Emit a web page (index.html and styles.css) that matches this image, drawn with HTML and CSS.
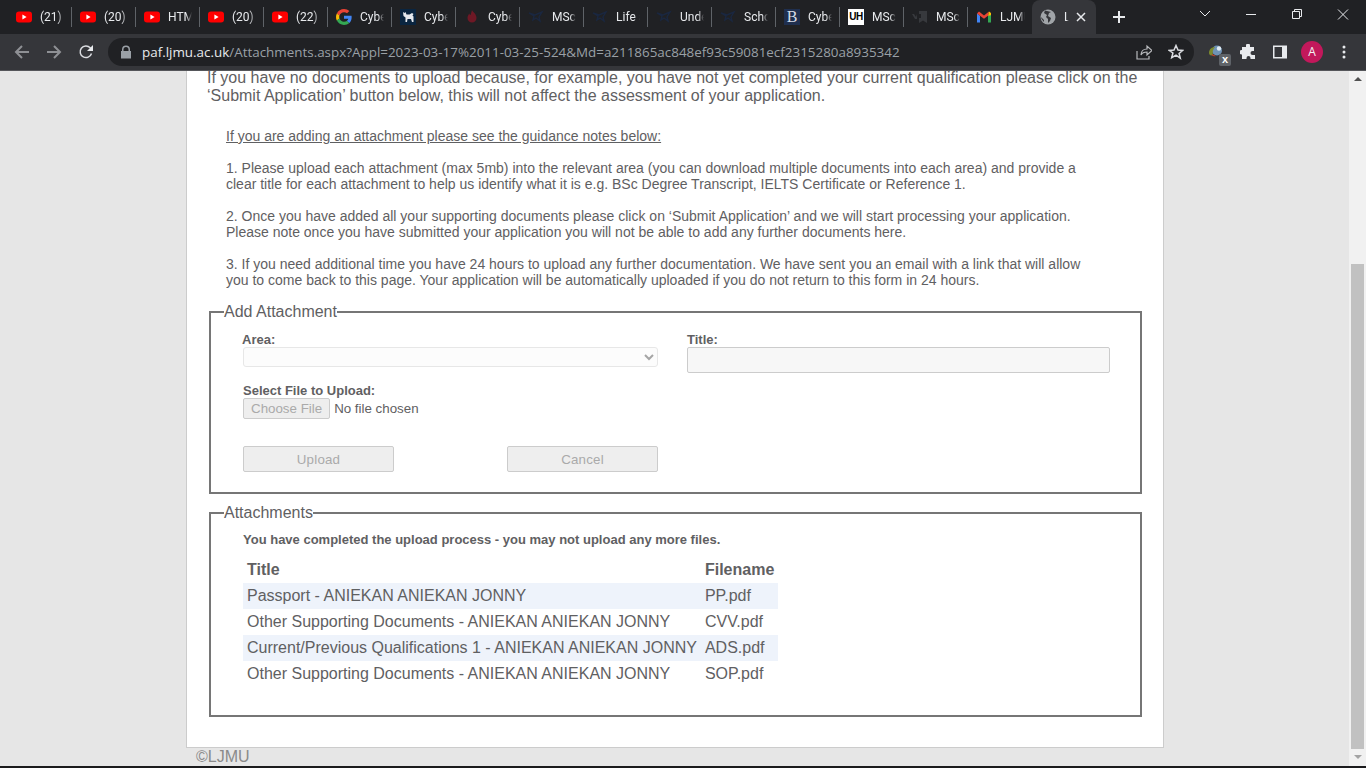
FILE: index.html
```html
<!DOCTYPE html>
<html>

<head>
    <title>Attachments</title>
    <link rel="stylesheet" href="styles.css">
</head>

<body>
    <svg class="sprite" width="0" height="0">
        <symbol id="yt" viewBox="0 0 16 16">
            <rect x="0" y="2.5" width="16" height="11" rx="3" fill="#f00" />
            <path d="M6.4 5.6 10.6 8l-4.2 2.4z" fill="#fff" />
        </symbol>
        <symbol id="google" viewBox="0 0 48 48">
            <path fill="#EA4335" d="M24 9.5c3.54 0 6.71 1.22 9.21 3.6l6.85-6.85C35.9 2.38 30.47 0 24 0 14.62 0 6.51 5.38 2.56 13.22l7.98 6.19C12.43 13.72 17.74 9.5 24 9.5z" />
            <path fill="#4285F4" d="M46.98 24.55c0-1.57-.15-3.09-.38-4.55H24v9.02h12.94c-.58 2.96-2.26 5.48-4.78 7.18l7.73 6c4.51-4.18 7.09-10.36 7.09-17.65z" />
            <path fill="#FBBC05" d="M10.53 28.59c-.48-1.45-.76-2.99-.76-4.59s.27-3.14.76-4.59l-7.98-6.19C.92 16.46 0 20.12 0 24c0 3.88.92 7.54 2.56 10.78l7.97-6.19z" />
            <path fill="#34A853" d="M24 48c6.48 0 11.93-2.13 16.03-5.81l-7.73-6c-2.15 1.45-4.92 2.3-8.3 2.3-6.26 0-11.57-4.22-13.47-9.91l-7.98 6.19C6.51 42.62 14.62 48 24 48z" />
        </symbol>
        <symbol id="lion" viewBox="0 0 16 16">
            <rect width="16" height="16" fill="#0a2540" />
            <path d="M3 3l1.500 1 1-1 1 2.500h3L12 4l1.500 1-1 1.500 1 1V13H12l-1-3H7.500L7 13H5.500V8.500L3.500 7z" fill="#e6e9ee" />
        </symbol>
        <symbol id="flame" viewBox="0 0 16 16">
            <path d="M8 1c.5 2 4.500 3.500 4.500 8a4.500 4.500 0 0 1-9 0c0-2 1-3.500 2-4.500 0 1 .5 1.500 1 1.500C7 4.500 7.500 3 8 1z" fill="#6e1825" />
        </symbol>
        <symbol id="navy" viewBox="0 0 16 16">
            <path d="M1 4l6 2 7-3-3 5 1 4-4-3-3 2 1-4z" fill="none" stroke="#1a2740" stroke-width="1.4" />
        </symbol>
        <symbol id="gmail" viewBox="0 0 16 16">
            <path d="M1 13.500V4.500l3 2.200v6.800z" fill="#4285f4" />
            <path d="M12 13.500V6.700l3-2.200v9z" fill="#34a853" />
            <path d="M1 4.500 3 2.500l5 4 5-4-1 4.200L8 9.700 4 6.700z" fill="#ea4335" />
            <path d="M13 2.500l2 1.500v2.200l-3 .5z" fill="#fbbc04" />
        </symbol>
        <symbol id="shield" viewBox="0 0 16 16">
            <path d="M7 2h8v12l-4-2.500L7 14V9h2V5H7zM0 5h2l2 3 1-3v5H3z" fill="#37393d" />
        </symbol>
        <symbol id="globe" viewBox="0 0 16 16">
            <circle cx="8" cy="8" r="7.500" fill="#a0a4a8" />
            <path d="M5 1.500 4 4l3 2-1 2 2 2v4l2-2 1-3-3-2 1-3 2-1zM1 8l3 3v2L1.500 10z" fill="#35363a" />
        </symbol>
    </svg>

    <div class="tabstrip">
        <div class="tab"><svg class="favicon"><use href="#yt" /></svg><span class="tab-title">(21) YouTube</span></div>
        <div class="tab"><svg class="favicon"><use href="#yt" /></svg><span class="tab-title">(20) YouTube</span></div>
        <div class="tab"><svg class="favicon"><use href="#yt" /></svg><span class="tab-title">HTML Tutorial</span></div>
        <div class="tab"><svg class="favicon"><use href="#yt" /></svg><span class="tab-title">(20) YouTube</span></div>
        <div class="tab"><svg class="favicon"><use href="#yt" /></svg><span class="tab-title">(22) YouTube</span></div>
        <div class="tab"><svg class="favicon"><use href="#google" /></svg><span class="tab-title">Cyber security</span></div>
        <div class="tab"><svg class="favicon"><use href="#lion" /></svg><span class="tab-title">Cyber security</span></div>
        <div class="tab"><svg class="favicon"><use href="#flame" /></svg><span class="tab-title">Cyber security</span></div>
        <div class="tab"><svg class="favicon"><use href="#navy" /></svg><span class="tab-title">MSc Cyber</span></div>
        <div class="tab"><svg class="favicon"><use href="#navy" /></svg><span class="tab-title">Life at</span></div>
        <div class="tab"><svg class="favicon"><use href="#navy" /></svg><span class="tab-title">Undergraduate</span></div>
        <div class="tab"><svg class="favicon"><use href="#navy" /></svg><span class="tab-title">Scholarships</span></div>
        <div class="tab"><div class="favicon fav-b">B</div><span class="tab-title">Cyber security</span></div>
        <div class="tab"><div class="favicon fav-uh">UH</div><span class="tab-title">MSc Cyber</span></div>
        <div class="tab"><svg class="favicon"><use href="#shield" /></svg><span class="tab-title">MSc Cyber</span></div>
        <div class="tab tab-last"><svg class="favicon"><use href="#gmail" /></svg><span class="tab-title">LJMU Mail</span></div>
        <div class="tab tab-active">
            <svg class="favicon"><use href="#globe" /></svg>
            <span class="tab-title">LJMU</span>
            <svg class="tab-close" viewBox="0 0 10 10"><path d="M1 1l8 8M9 1l-8 8" /></svg>
        </div>
        <svg class="new-tab" viewBox="0 0 12 12"><path d="M6 0v12M0 6h12" /></svg>
        <div class="window-controls">
            <svg class="win-icon" viewBox="0 0 46 28"><path d="M18 11l5 5 5-5" /></svg>
            <svg class="win-icon" viewBox="0 0 46 28"><path d="M18 14.500h10" /></svg>
            <svg class="win-icon" viewBox="0 0 46 28"><path d="M18.500 11.500h7v7h-7zM20.500 11.500v-2h7v7h-2" /></svg>
            <svg class="win-icon" viewBox="0 0 46 28"><path d="M18 9.500l10 10M28 9.500l-10 10" /></svg>
        </div>
    </div>

    <div class="toolbar">
        <button class="tool dim"><svg viewBox="0 0 16 16"><path d="M15 8H2M8 2 2 8l6 6" /></svg></button>
        <button class="tool dim"><svg viewBox="0 0 16 16"><path d="M1 8h13M8 2l6 6-6 6" /></svg></button>
        <button class="tool"><svg viewBox="0 0 16 16"><path d="M13.500 9.500A5.800 5.800 0 1 1 12.200 3.800L14 5.500" /><path class="solid" d="M15 1v6H9z" /></svg></button>
        <div class="omnibox">
            <svg class="lock" viewBox="0 0 12 14"><path d="M2 6V4.500a4 4 0 0 1 8 0V6h1v7.500H1V6zm1.500 0h5V4.500a2.500 2.500 0 0 0-5 0z" /></svg>
            <span class="url"><span class="url-host">paf.ljmu.ac.uk</span>/Attachments.aspx?Appl=2023-03-17%2011-03-25-524&amp;Md=a211865ac848ef93c59081ecf2315280a8935342</span>
            <button class="tool share"><svg viewBox="0 0 16 16"><path d="M1 7v8h12v-3M5 11c0-4 3-6 6-6V2l5 4.500-5 4.500V8c-3 0-5 1-6 3z" /></svg></button>
            <button class="tool star"><svg viewBox="0 0 16 16"><path d="M8 1.500l2 4.500 4.800.4-3.700 3.100 1.200 4.700L8 11.200l-4.300 2.500 1.200-4.700L1.200 6.400 6 6z" /></svg></button>
        </div>
        <button class="tool ext">
            <svg viewBox="0 0 16 16" class="raw">
                <circle cx="9" cy="6.500" r="5" fill="#6f93b5" />
                <path d="M1 9c0-4 3-6 6-6-2 2-3 5-2 8-2 1-4 0-4-2z" fill="#7c8a2e" />
                <path d="M4 10c-1 1 1 3 4 2-1-1-3-1-4-2z" fill="#c0452f" />
                <circle cx="11" cy="4.500" r="2.200" fill="#dfeaf4" />
            </svg>
            <span class="ext-badge">x</span>
        </button>
        <button class="tool"><svg viewBox="0 0 16 16"><path class="solid" d="M6 1.500a2 2 0 0 1 4 0V3h4v4h-1.500a2 2 0 0 0 0 4H15v4h-4.500v-1a2 2 0 0 0-4 0v1H2v-4.500h-.5a2.200 2.200 0 0 1 0-4.500H2V3h4z" /></svg></button>
        <button class="tool"><svg viewBox="0 0 16 16"><path class="solid" fill-rule="evenodd" d="M1 1.500h14v13H1zM2.500 3v10H10V3z" /></svg></button>
        <button class="tool"><span class="avatar">A</span></button>
        <button class="tool"><svg viewBox="0 0 16 16"><circle class="solid" cx="8" cy="3" r="1.500" /><circle class="solid" cx="8" cy="8" r="1.500" /><circle class="solid" cx="8" cy="13" r="1.500" /></svg></button>
    </div>

    <div class="viewport">
        <div class="page">
            <div class="container">
                <p class="intro">If you have no documents to upload because, for example, you have not yet completed your current qualification please click on the ‘Submit Application’ button below, this will not affect the assessment of your application.</p>

                <div class="guidance">
                    <p><u>If you are adding an attachment please see the guidance notes below:</u></p>
                    <p>1. Please upload each attachment (max 5mb) into the relevant area (you can download multiple documents into each area) and provide a clear title for each attachment to help us identify what it is e.g. BSc Degree Transcript, IELTS Certificate or Reference 1.</p>
                    <p>2. Once you have added all your supporting documents please click on ‘Submit Application’ and we will start processing your application. Please note once you have submitted your application you will not be able to add any further documents here.</p>
                    <p>3. If you need additional time you have 24 hours to upload any further documentation. We have sent you an email with a link that will allow you to come back to this page. Your application will be automatically uploaded if you do not return to this form in 24 hours.</p>
                </div>

                <fieldset class="box box-add">
                    <legend>Add Attachment</legend>
                    <div class="form-grid">
                        <div class="field">
                            <label class="area-label">Area:</label>
                            <select class="area-select" disabled><option></option></select>
                        </div>
                        <div class="field">
                            <label>Title:</label>
                            <input class="title-input" type="text" disabled>
                        </div>
                        <div class="field file-field">
                            <label>Select File to Upload:</label>
                            <input class="file-input" type="file" disabled>
                        </div>
                        <div class="form-buttons">
                            <button class="btn" disabled>Upload</button>
                            <button class="btn" disabled>Cancel</button>
                        </div>
                    </div>
                </fieldset>

                <fieldset class="box box-list">
                    <legend>Attachments</legend>
                    <p class="done">You have completed the upload process - you may not upload any more files.</p>
                    <table class="files">
                        <tr><th>Title</th><th>Filename</th></tr>
                        <tr class="alt"><td>Passport - ANIEKAN ANIEKAN JONNY</td><td>PP.pdf</td></tr>
                        <tr><td>Other Supporting Documents - ANIEKAN ANIEKAN JONNY</td><td>CVV.pdf</td></tr>
                        <tr class="alt"><td>Current/Previous Qualifications 1 - ANIEKAN ANIEKAN JONNY</td><td>ADS.pdf</td></tr>
                        <tr><td>Other Supporting Documents - ANIEKAN ANIEKAN JONNY</td><td>SOP.pdf</td></tr>
                    </table>
                </fieldset>
            </div>
            <div class="copyright">©LJMU</div>
        </div>
        <div class="scrollbar">
            <div class="arrow-up"></div>
            <div class="thumb"></div>
            <div class="arrow-down"></div>
        </div>
    </div>
    <div class="taskbar-edge"></div>
</body>

</html>
```

FILE: styles.css
```css
* {
    box-sizing: border-box;
}

body {
    margin: 0;
    height: 768px;
    overflow: hidden;
    display: flex;
    flex-direction: column;
    font-family: "Liberation Sans", Arial, sans-serif;
    background-color: #e6e6e6;
    color: #5f6062;
}

.sprite {
    display: block;
    height: 0;
}

/* tab strip */
.tabstrip {
    display: flex;
    align-items: center;
    height: 34px;
    padding-left: 8px;
    background-color: #202124;
}

.tab {
    display: flex;
    align-items: center;
    gap: 8px;
    flex: none;
    width: 64px;
    height: 20px;
    padding: 0 7px 0 8px;
    border-right: 1px solid #5f6368;
}

.tab-last {
    border-right: none;
}

.tab-active {
    height: 34px;
    padding-right: 10px;
    border-right: none;
    border-radius: 8px 8px 0 0;
    background-color: #35363a;
}

.favicon {
    flex: none;
    width: 16px;
    height: 16px;
}

.fav-b {
    background-color: #1f2f4f;
    color: #d5dbe6;
    font: 16px/16px "Liberation Serif", serif;
    text-align: center;
}

.fav-uh {
    background-color: #fff;
    color: #000;
    font: bold 10px/16px "Liberation Sans", sans-serif;
    letter-spacing: -0.5px;
    text-align: center;
}

.tab-title {
    flex: 1;
    min-width: 0;
    overflow: hidden;
    white-space: nowrap;
    font-family: Roboto, sans-serif;
    font-size: 12px;
    color: #e8eaed;
    -webkit-mask-image: linear-gradient(to right, #000 75%, transparent);
    mask-image: linear-gradient(to right, #000 75%, transparent);
}

.tab-active .tab-title {
    -webkit-mask-image: linear-gradient(to right, #000 30%, transparent 60%);
    mask-image: linear-gradient(to right, #000 30%, transparent 60%);
}

.tab-close {
    flex: none;
    width: 10px;
    height: 10px;
    margin-left: -4px;
    fill: none;
    stroke: #e8eaed;
    stroke-width: 1.5;
}

.new-tab {
    flex: none;
    width: 12px;
    height: 12px;
    margin-left: 17px;
    fill: none;
    stroke: #e8eaed;
    stroke-width: 2;
}

.window-controls {
    display: flex;
    align-self: flex-start;
    margin-left: auto;
}

.win-icon {
    width: 46px;
    height: 28px;
    fill: none;
    stroke: #e8eaed;
    stroke-width: 1;
}

/* toolbar */
.toolbar {
    display: flex;
    align-items: center;
    height: 37px;
    padding: 0 6px 1px;
    background-color: #35363a;
    border-bottom: 1px solid #55565a;
}

.tool {
    position: relative;
    flex: none;
    display: flex;
    align-items: center;
    justify-content: center;
    width: 32px;
    height: 28px;
    padding: 0;
    border: none;
    background: none;
}

.tool svg {
    width: 16px;
    height: 16px;
    fill: none;
    stroke: #dadce0;
    stroke-width: 1.5;
}

.tool svg.raw {
    stroke: none;
}

.tool .solid {
    fill: #e8eaed;
    stroke: none;
}

.tool.dim svg {
    stroke: #8e9094;
    stroke-width: 2;
}

.omnibox {
    flex: 1;
    display: flex;
    align-items: center;
    height: 28px;
    margin: 0 6px;
    padding: 0 2px 0 12px;
    border-radius: 14px;
    background-color: #202124;
}

.lock {
    flex: none;
    width: 12px;
    height: 14px;
    fill: #9aa0a6;
}

.url {
    flex: 1;
    min-width: 0;
    margin-left: 10px;
    white-space: nowrap;
    font-family: "Open Sans", sans-serif;
    font-size: 13.42px;
    color: #9aa0a6;
}

.url-host {
    color: #e8eaed;
}

.share svg {
    stroke: #b8babd;
    stroke-width: 1.2;
}

.ext-badge {
    position: absolute;
    right: 1px;
    bottom: 0;
    width: 12px;
    height: 12px;
    border-radius: 2px;
    background-color: #5f6368;
    color: #fff;
    font: bold 11px/11px "Liberation Sans", sans-serif;
    text-align: center;
}

.avatar {
    width: 22px;
    height: 22px;
    border-radius: 50%;
    background-color: #c2185b;
    color: #f3f3f3;
    font: 12px/22px "Open Sans", sans-serif;
    text-align: center;
}

/* page */
.viewport {
    flex: 1;
    min-height: 0;
    display: flex;
}

.page {
    flex: 1;
    min-width: 0;
    overflow: hidden;
    padding-left: 186px;
}

.container {
    display: flow-root;
    width: 978px;
    height: 677px;
    padding: 0 20px;
    background-color: #fff;
    border: 1px solid #ccc;
    border-top: none;
}

.intro {
    width: 938px;
    margin: -2px 0 0;
    font-size: 16px;
    line-height: 18px;
}

.guidance {
    width: 870px;
    margin: 23px 0 0 19px;
    font-size: 14px;
    line-height: 16px;
}

.guidance p {
    margin: 0 0 16px;
}

.guidance p:last-child {
    margin-bottom: 0;
}

.box {
    width: 933px;
    margin: 0 0 0 2px;
    padding: 0;
    border: 2px solid #767676;
}

.box legend {
    margin-left: 13px;
    padding: 0;
    font-size: 16px;
    line-height: 18px;
}

.box-add {
    height: 191px;
    margin-top: 15px;
}

.box-list {
    height: 213px;
    margin-top: 10px;
}

.form-grid {
    display: grid;
    grid-template-columns: 415px 423px;
    column-gap: 29px;
    padding: 11px 0 0 32px;
}

.field {
    display: flex;
    flex-direction: column;
}

.field label {
    height: 15px;
    font-size: 13px;
    font-weight: bold;
    line-height: 15px;
}

.area-label {
    margin-left: -1px;
}

.area-select {
    width: 415px;
    height: 20px;
    background-color: #fbfbfb;
    border: 1px solid #ddd;
    border-radius: 3px;
}

.title-input {
    width: 423px;
    height: 26px;
    background-color: #f7f7f7;
    border: 1px solid #ccc;
    border-radius: 2px;
}

.file-field {
    grid-column: 1 / 3;
    margin-top: 10px;
}

.file-input {
    font-family: "Liberation Sans", sans-serif;
    font-size: 13.33px;
    color: #5f6062;
}

.file-input::file-selector-button {
    height: 21px;
    margin-right: 4px;
    padding: 0 7px;
    background-color: #eee;
    border: 1px solid #ccc;
    border-radius: 2px;
    color: #aaa;
    font-size: 13.33px;
}

.form-buttons {
    grid-column: 1 / 2;
    display: flex;
    justify-content: space-between;
    margin-top: 27px;
}

.btn {
    width: 151px;
    height: 26px;
    background-color: #eee;
    border: 1px solid #ccc;
    border-radius: 2px;
    color: #aaa;
    font-family: "Liberation Sans", sans-serif;
    font-size: 13.33px;
    letter-spacing: 0.2px;
}

.done {
    margin: 10px 0 0 32px;
    font-size: 13px;
    font-weight: bold;
    line-height: 15px;
}

.files {
    margin: 10px 0 0 32px;
    border-collapse: collapse;
    font-size: 16px;
}

.files th,
.files td {
    height: 26px;
    padding: 0 4px;
    text-align: left;
    white-space: nowrap;
}

.files .alt {
    background-color: #eef3fb;
}

.copyright {
    margin-left: 10px;
    font-size: 16px;
    line-height: 18px;
    color: #8a8a8a;
}

/* scrollbar */
.scrollbar {
    flex: none;
    display: flex;
    flex-direction: column;
    align-items: center;
    width: 17px;
    background-color: #f1f1f1;
}

.arrow-up {
    flex: none;
    width: 0;
    height: 0;
    margin-top: 6px;
    border-left: 4px solid transparent;
    border-right: 4px solid transparent;
    border-bottom: 4px solid #505050;
}

.thumb {
    flex: none;
    width: 13px;
    height: 485px;
    margin-top: 183px;
    background-color: #c1c1c1;
}

.arrow-down {
    flex: none;
    width: 0;
    height: 0;
    margin-top: 6px;
    border-left: 4px solid transparent;
    border-right: 4px solid transparent;
    border-top: 4px solid #a3a3a3;
}

.taskbar-edge {
    flex: none;
    height: 2px;
    background-color: #1b1b1d;
}
```
